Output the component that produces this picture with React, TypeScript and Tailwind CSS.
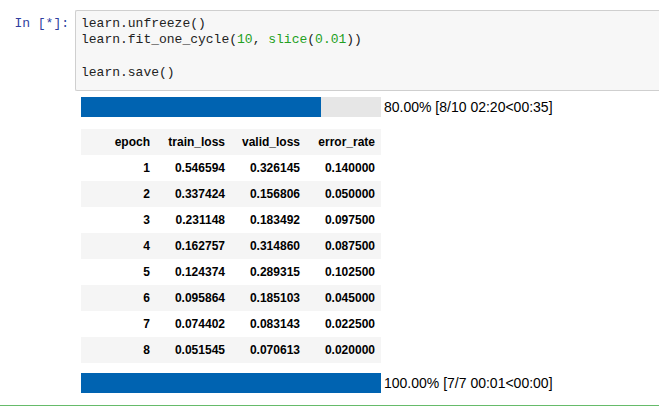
import React from 'react';

const rows = [
  ['1', '0.546594', '0.326145', '0.140000'],
  ['2', '0.337424', '0.156806', '0.050000'],
  ['3', '0.231148', '0.183492', '0.097500'],
  ['4', '0.162757', '0.314860', '0.087500'],
  ['5', '0.124374', '0.289315', '0.102500'],
  ['6', '0.095864', '0.185103', '0.045000'],
  ['7', '0.074402', '0.083143', '0.022500'],
  ['8', '0.051545', '0.070613', '0.020000'],
];

const mono = { fontFamily: '"Liberation Mono", "Courier New", monospace' };

function ProgressBar({ pct, label }: { pct: number; label: string }) {
  return (
    <div className="flex items-center h-[20px]">
      <div className="w-[300px] h-[20px] bg-[#e6e6e6]">
        <div className="h-full bg-[#0063b1]" style={{ width: `${pct}%` }} />
      </div>
      <span className="ml-[3px] text-[14px] text-black leading-none">{label}</span>
    </div>
  );
}

export default function App() {
  return (
    <div className="w-[659px] h-[407px] overflow-hidden bg-white font-['Liberation_Sans',Arial,sans-serif]">
      <div className="pt-[10px] h-[405px]">
        {/* input cell */}
        <div className="flex">
          <div
            className="w-[75px] shrink-0 pr-[6px] pt-[6px] text-right text-[13px] leading-[16.4px] text-[#303f9f]"
            style={mono}
          >
            In&nbsp;[*]:
          </div>
          <div
            className="flex-1 h-[81px] border border-r-0 border-[#cfcfcf] bg-[#f7f7f7] rounded-l-[2px] pt-[5px] pl-[5px] text-[13px] leading-[16.4px] text-[#222] whitespace-pre"
            style={mono}
          >
            <div>learn.unfreeze()</div>
            <div>
              learn.fit_one_cycle(<span className="text-[#22a022]">10</span>,{' '}
              <span className="text-[#22a022]">slice</span>(<span className="text-[#22a022]">0.01</span>))
            </div>
            <div>{' '}</div>
            <div>learn.save()</div>
          </div>
        </div>

        {/* output */}
        <div className="pl-[81px] pt-[6px]">
          <ProgressBar pct={80} label="80.00% [8/10 02:20<00:35]" />

          <table className="mt-[12px] w-[300px] table-fixed border-collapse text-[12px] font-bold text-black">
            <thead>
              <tr className="h-[26px] bg-[#f5f5f5]">
                <th className="text-right pr-[6px] font-bold">epoch</th>
                <th className="text-right pr-[6px] font-bold">train_loss</th>
                <th className="text-right pr-[6px] font-bold">valid_loss</th>
                <th className="text-right pr-[6px] font-bold">error_rate</th>
              </tr>
            </thead>
            <tbody>
              {rows.map((r, i) => (
                <tr key={r[0]} className={i % 2 === 1 ? 'h-[26px] bg-[#f5f5f5]' : 'h-[26px] bg-white'}>
                  {r.map((c, j) => (
                    <td key={j} className="text-right pr-[6px]">
                      {c}
                    </td>
                  ))}
                </tr>
              ))}
            </tbody>
          </table>

          <div className="mt-[10px]">
            <ProgressBar pct={100} label="100.00% [7/7 00:01<00:00]" />
          </div>
        </div>
      </div>
      {/* selected cell edge */}
      <div className="h-px bg-[#66bb6a]" />
    </div>
  );
}
